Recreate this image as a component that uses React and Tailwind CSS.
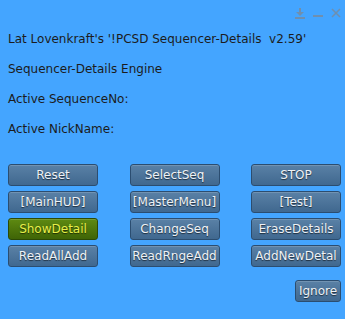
import React from 'react';

const rows = [
  ['Reset', 'SelectSeq', 'STOP'],
  ['[MainHUD]', '[MasterMenu]', '[Test]'],
  ['ShowDetail', 'ChangeSeq', 'EraseDetails'],
  ['ReadAllAdd', 'ReadRngeAdd', 'AddNewDetal'],
];

function Btn({ label, active, className = '' }) {
  const tone = active
    ? 'bg-gradient-to-b from-[#5e8a12] to-[#3f6406] border-[#2c4a06] text-[#e8f04a]'
    : 'bg-gradient-to-b from-[#5a81a6] to-[#40688f] border-[#2b4d70] text-[#eef2f6]';
  return (
    <div
      className={`h-[22px] rounded-[3px] border flex items-center justify-center text-[12px] leading-none shadow-[inset_0_1px_0_rgba(255,255,255,0.15)] [text-shadow:0_1px_1px_rgba(0,0,0,0.6)] ${tone} ${className}`}
    >
      {label}
    </div>
  );
}

export default function App() {
  return (
    <div className="w-[345px] h-[319px] bg-[#44a5ff] text-[#1c1c1c] font-['DejaVu_Sans',sans-serif] text-[12px] flex flex-col">
      <div className="h-[24px] flex justify-end items-center gap-[8px] pr-[4px] pt-[2px] text-[#6f8fae]">
        <svg width="10" height="11" viewBox="0 0 10 11">
          <rect x="4" y="0" width="2" height="5" fill="currentColor" />
          <path d="M1 4 L9 4 L5 8 Z" fill="currentColor" />
          <rect x="0" y="9" width="10" height="2" fill="currentColor" />
        </svg>
        <svg width="10" height="11" viewBox="0 0 10 11">
          <rect x="0" y="7" width="10" height="2" fill="currentColor" />
        </svg>
        <svg width="10" height="11" viewBox="0 0 10 11">
          <path d="M1 1 L9 9 M9 1 L1 9" stroke="currentColor" strokeWidth="1.5" />
        </svg>
      </div>
      <div className="px-[8px] flex flex-col">
        <div className="h-[30px] flex items-center">Lat Lovenkraft's '!PCSD Sequencer-Details&nbsp;&nbsp;v2.59'</div>
        <div className="h-[30px] flex items-center">Sequencer-Details Engine</div>
        <div className="h-[30px] flex items-center">Active SequenceNo:</div>
        <div className="h-[30px] flex items-center">Active NickName:</div>
      </div>
      <div className="mt-[20px] pl-[8px] pr-[4px] grid grid-cols-[90px_90px_90px] justify-between gap-y-[5px]">
        {rows.flat().map((l) => (
          <Btn key={l} label={l} active={l === 'ShowDetail'} />
        ))}
      </div>
      <div className="mt-[13px] pr-[4px] flex justify-end">
        <Btn label="Ignore" className="w-[46px]" />
      </div>
    </div>
  );
}
